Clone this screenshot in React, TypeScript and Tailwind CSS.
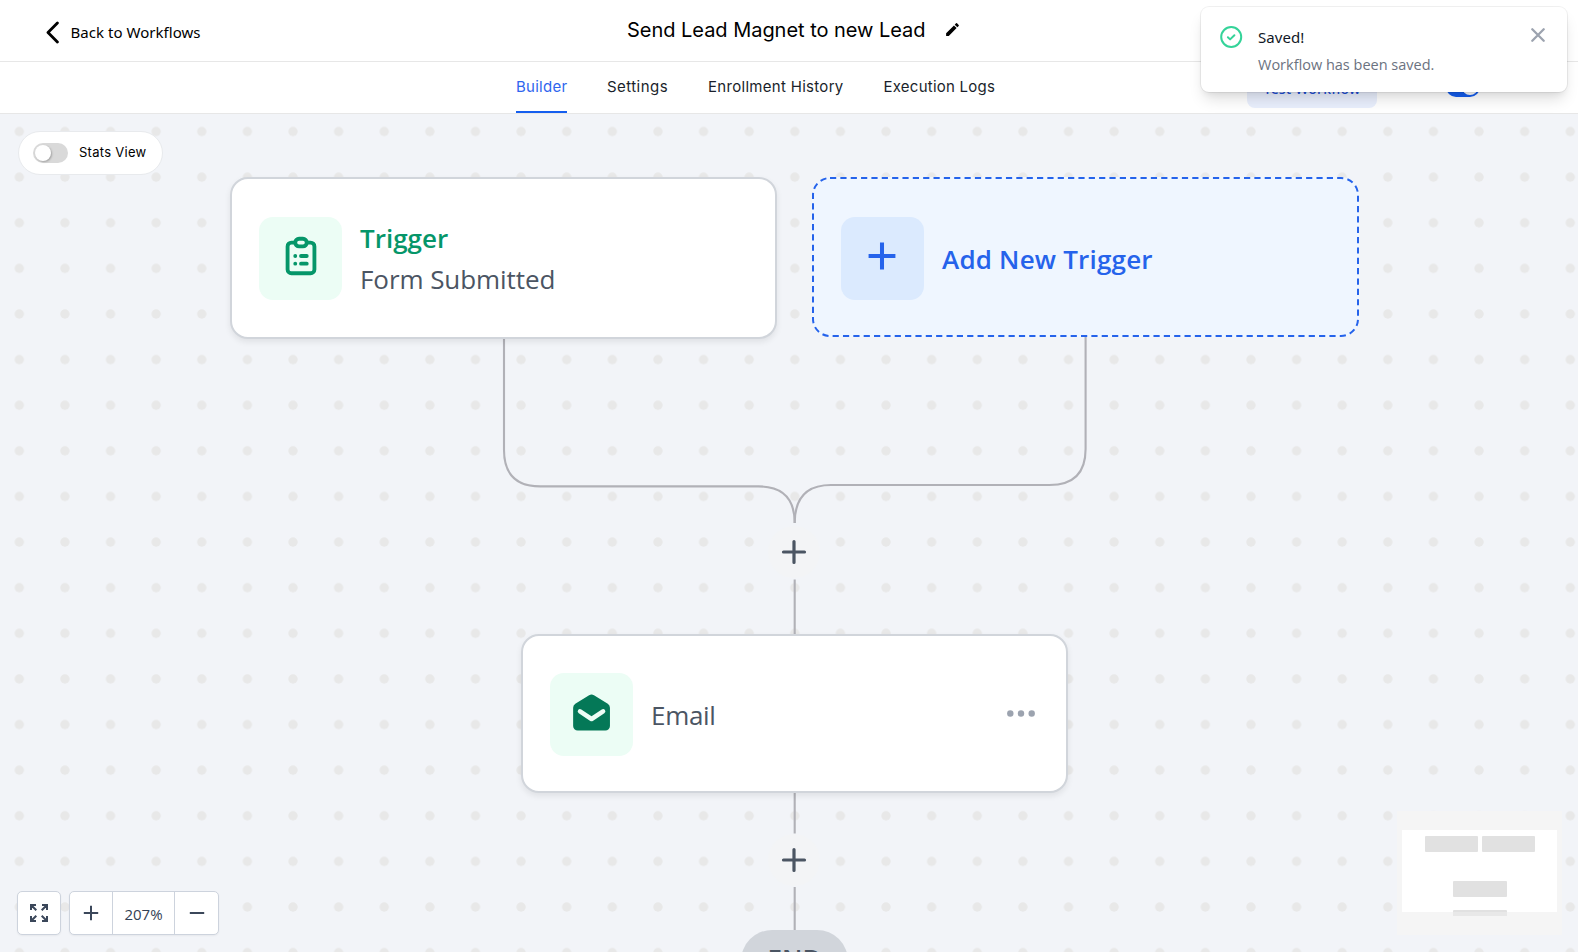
import type { ReactNode } from 'react';

const SEGOE = "font-['Open_Sans','Noto_Sans',sans-serif]";
const NOTO = "font-['Noto_Sans','Open_Sans',sans-serif]";

const tabs = [
  { label: 'Builder', size: 'w-[51px] tracking-[0.25px]', active: true },
  { label: 'Settings', size: 'w-[61px] tracking-[0.45px]', active: false },
  { label: 'Enrollment History', size: 'w-[135.5px] tracking-[0.3px]', active: false },
  { label: 'Execution Logs', size: 'w-[112px] tracking-[0.24px]', active: false },
];

function Header() {
  return (
    <header className="flex h-[62px] shrink-0 items-center border-b border-[#e7e7e7] bg-white pl-[46px]">
      <button className="flex w-[581px] items-center gap-[11.5px] pt-[3px] text-black">
        <svg className="h-[23px] w-[13px]" viewBox="0 0 13 23" fill="none" stroke="currentColor" strokeWidth="2.8">
          <path d="M11.4 1.9 2 11.5l9.4 9.6" strokeLinecap="round" strokeLinejoin="round" />
        </svg>
        <span className={`${NOTO} text-[15px] leading-5 tracking-[0.04px]`}>Back to Workflows</span>
      </button>
      <div className="flex items-center gap-[16.5px] pb-0.5">
        <h1 className="w-[300px] whitespace-nowrap text-xl leading-7 tracking-[-0.03px] text-black">Send Lead Magnet to new Lead</h1>
        <svg className="size-[17px]" viewBox="0 0 24 24" fill="black">
          <path d="M3 17.25V21h3.75L17.81 9.94l-3.75-3.75L3 17.25zM20.71 7.04a1 1 0 0 0 0-1.41l-2.34-2.34a1 1 0 0 0-1.41 0l-1.83 1.83 3.75 3.75 1.83-1.83z" />
        </svg>
      </div>
    </header>
  );
}

function TabBar() {
  return (
    <nav className="flex h-[52px] shrink-0 border-b border-[#e7e7e7] bg-white pl-[516px]">
      <div className="flex gap-10">
        {tabs.map((t) => (
          <button
            key={t.label}
            className={`${t.size} flex h-[51px] whitespace-nowrap pt-[15px] text-[15px] leading-5 ${
              t.active ? 'border-b-2 border-[#155eef] text-[#2f66ee]' : 'text-[#1a1f2b]'
            }`}
          >
            {t.label}
          </button>
        ))}
      </div>
      <div className="ml-[251.5px] flex items-start gap-[68.5px] pt-[9px]">
        <button className={`${NOTO} h-[36.5px] w-[130px] rounded-lg bg-[#e9effd] pb-px text-sm font-medium tracking-[0.2px] text-[#1d4fd8]`}>
          Test Workflow
        </button>
        <span className="mt-1.5 flex h-5 w-[34px] justify-end rounded-full bg-[#155eef] p-0.5">
          <span className="size-4 rounded-full bg-white" />
        </span>
      </div>
    </nav>
  );
}

function Toast() {
  return (
    <div className="absolute left-[1201px] top-[7px] z-20 flex h-[85px] w-[366px] rounded-lg bg-white pl-[18px] pt-[18px] shadow-[0_0_0_1px_rgba(0,0,0,0.06),0_10px_15px_-3px_rgba(0,0,0,0.13),0_4px_6px_-2px_rgba(0,0,0,0.06)]">
      <svg className="size-6" viewBox="0 0 24 24" fill="none" stroke="#34d399" strokeWidth="2">
        <circle cx="12.2" cy="12" r="10" />
        <path d="m8.9 12.3 2.2 2.1 4.3-4.2" strokeLinecap="round" strokeLinejoin="round" />
      </svg>
      <div className={`${NOTO} ml-[15px] flex w-[273px] flex-col gap-2 pt-0.5`}>
        <p className="text-[15px] leading-5 tracking-[0.05px] text-[#111827]">Saved!</p>
        <p className={`${SEGOE} text-[14.5px] leading-5 text-[#6b7280]`}>Workflow has been saved.</p>
      </div>
      <svg className="mt-[3px] size-[14px]" viewBox="0 0 14 14" fill="none" stroke="#9ca3af" strokeWidth="2.3" strokeLinecap="round">
        <path d="m1.3 1.3 11.4 11.4m0-11.4L1.3 12.7" />
      </svg>
    </div>
  );
}

function NodeCard({ place, tone, icon, children }: { place: string; tone: string; icon: ReactNode; children: ReactNode }) {
  return (
    <div className={`absolute ${place} flex w-[547px] items-center gap-[18px] rounded-[18px] ${SEGOE} text-[26px] leading-[40.5px]`}>
      <div className={`flex size-[83px] shrink-0 items-center justify-center rounded-[14px] pb-1 ${tone}`}>{icon}</div>
      {children}
    </div>
  );
}

function AddStep({ place }: { place: string }) {
  return (
    <div className={`absolute ${place} flex size-[52px] items-center justify-center rounded-full bg-[#f3f4f6]`}>
      <svg className="size-[26px]" viewBox="0 0 26 26" stroke="#4b5563" strokeWidth="3.2" strokeLinecap="round">
        <path d="M13 2.5v21M2.5 13h21" />
      </svg>
    </div>
  );
}

function Edges() {
  return (
    <svg className="absolute inset-0 h-[838px] w-[1578px]" viewBox="0 114 1578 838" fill="none" stroke="#b1b1b7" strokeWidth="2.1">
      <path d="M504 338V450Q504 486.4 540.5 486.4H758.5Q794.7 486.4 794.7 523" />
      <path d="M1085.6 336V449Q1085.6 485 1049.5 485H831Q794.7 485 794.7 523" />
      <path d="M794.7 579.5V635M794.7 792V833.5M794.7 887V931" />
    </svg>
  );
}

function DotGrid() {
  return (
    <svg className="absolute inset-0 h-[838px] w-[1578px]">
      <defs>
        <pattern id="dots" x="-3.5" y="-5.3" width="45.617" height="45.617" patternUnits="userSpaceOnUse">
          <circle cx="22.8" cy="22.8" r="4.7" fill="#e8e8e8" />
        </pattern>
      </defs>
      <rect width="1578" height="838" fill="url(#dots)" />
    </svg>
  );
}

function MiniMap() {
  return (
    <svg className="absolute left-[1397px] top-[697px] h-[124px] w-[165px]" viewBox="0 0 165 124">
      <rect width="165" height="124" fill="#f5f5f5" />
      <rect x="5" y="19" width="155" height="82" fill="white" />
      <g fill="#e1e1e1">
        <rect x="28" y="25" width="53" height="16" rx="1" />
        <rect x="85" y="25" width="53" height="16" rx="1" />
        <rect x="56" y="70" width="54" height="16" rx="1" />
        <rect x="56" y="99" width="54" height="3" rx="1" />
      </g>
      <rect x="56" y="101" width="54" height="4" fill="#e8e8e8" />
    </svg>
  );
}

function ZoomControls() {
  return (
    <div className="absolute left-[17px] top-[777px] flex h-11 gap-2 text-[#3b475a]">
      <button className="flex w-11 items-center justify-center rounded-[5px] border border-[#cdd3dd] bg-white shadow-xs">
        <svg className="size-[18px]" viewBox="0 0 18 18" fill="none" stroke="currentColor" strokeWidth="2">
          <path d="M1 6V1h5M1.3 1.3l5 5M12 1h5v5M16.7 1.3l-5 5M1 12v5h5M1.3 16.7l5-5M12 17h5v-5M16.7 16.7l-5-5" />
        </svg>
      </button>
      <div className="flex w-[150px] divide-x divide-[#cdd3dd] rounded-[5px] border border-[#cdd3dd] bg-white shadow-xs">
        <button className="flex w-[43px] items-center justify-center">
          <svg className="size-4" viewBox="0 0 16 16" stroke="currentColor" strokeWidth="2">
            <path d="M.8 8h14.4" />
            <path d="M8 .8v14.4" />
          </svg>
        </button>
        <span className={`${SEGOE} flex w-[62px] items-center justify-center pt-px text-[15px] leading-5 text-[#334155]`}>207%</span>
        <button className="flex w-[43px] items-center justify-center">
          <svg className="size-4" viewBox="0 0 16 16" stroke="currentColor" strokeWidth="2">
            <path d="M.8 8h14.4" />
          </svg>
        </button>
      </div>
    </div>
  );
}

function Canvas() {
  return (
    <main className="relative min-h-0 flex-1 overflow-hidden bg-[#f2f4f8]">
      <DotGrid />
      <Edges />

      <NodeCard
        place="left-[230px] top-[63px] h-[162px] border-2 border-[#d1d5db] bg-white pl-[27px] shadow-[0_3px_6px_rgba(0,0,0,0.08)]"
        tone="bg-[#ecfdf5]"
        icon={
          <svg className="size-[46px]" viewBox="0 0 24 24" fill="none" stroke="#059669" strokeWidth="2" strokeLinecap="round" strokeLinejoin="round">
            <path d="M9 5H7a2 2 0 0 0-2 2v12a2 2 0 0 0 2 2h10a2 2 0 0 0 2-2V7a2 2 0 0 0-2-2h-2M9 5a2 2 0 0 0 2 2h2a2 2 0 0 0 2-2M9 5a2 2 0 0 1 2-2h2a2 2 0 0 1 2 2m-3 7h3m-3 4h3m-6-4h.01M9 16h.01" />
          </svg>
        }
      >
        <div className="pt-px">
          <p className="font-semibold text-[#059669]">Trigger</p>
          <p className="tracking-[-0.07px] text-[#4b5563]">Form Submitted</p>
        </div>
      </NodeCard>

      <NodeCard
        place="left-[812px] top-[63px] h-[160px] bg-[#eff6ff] pl-[29px] pt-0.5"
        tone="bg-[#dbeafe]"
        icon={
          <svg className="mr-px size-[46px]" viewBox="0 0 24 24" stroke="#2563eb" strokeWidth="2.1">
            <path d="M12 5v14M5 12h14" />
          </svg>
        }
      >
        <svg className="absolute inset-0 h-[160px] w-[547px]" fill="none">
          <rect x="1" y="1" width="545" height="158" rx="17" stroke="#2563eb" strokeWidth="2" strokeDasharray="6.2 4.15" />
        </svg>
        <p className="pt-0.5 font-semibold tracking-[0.2px] text-[#2563eb]">Add New Trigger</p>
      </NodeCard>

      <AddStep place="left-[768px] top-[412px]" />

      <NodeCard
        place="left-[521px] top-[520px] h-[159px] border-2 border-[#d1d5db] bg-white pl-[27px] pt-0.5 shadow-[0_3px_6px_rgba(0,0,0,0.08)]"
        tone="bg-[#ecfdf5]"
        icon={
          <svg className="size-[46px]" viewBox="0.2 0.4 20 20" fill="#047857">
            <path
              fillRule="evenodd"
              d="M2.94 6.412A2 2 0 0 0 2 8.108V16a2 2 0 0 0 2 2h12a2 2 0 0 0 2-2V8.108a2 2 0 0 0-.94-1.696l-6-3.75a2 2 0 0 0-2.12 0l-6 3.75zm2.615 2.423a1 1 0 1 0-1.11 1.664l5 3.333a1 1 0 0 0 1.11 0l5-3.333a1 1 0 0 0-1.11-1.664L10 11.798 5.555 8.835z"
            />
          </svg>
        }
      >
        <p className="flex-1 pt-0.5 tracking-[-0.3px] text-[#4b5563]">Email</p>
        <svg className="mb-0.5 mr-[31.5px] h-[7px] w-7" viewBox="0 0 28 7" fill="#9ca3af">
          <circle cx="3.3" cy="3.5" r="3.2" />
          <circle cx="14" cy="3.5" r="3.2" />
          <circle cx="24.7" cy="3.5" r="3.2" />
        </svg>
      </NodeCard>

      <AddStep place="left-[768px] top-[720px]" />

      <div className={`absolute left-[741px] top-[816px] flex h-[62px] w-[107px] justify-center rounded-full bg-[#d1d5db] pt-2 ${SEGOE} text-[26px] font-semibold leading-10 text-[#4b5563]`}>
        END
      </div>

      <div className="absolute left-[17.5px] top-[17px] flex h-[43.5px] w-[145px] items-center gap-[11.5px] rounded-full border border-[#e8eaed] bg-white pl-3.5">
        <span className="flex h-5 w-[35px] rounded-full bg-[#d9d9d9] p-0.5">
          <span className="size-4 rounded-full bg-white shadow-[1px_1px_2px_rgba(0,0,0,0.25)]" />
        </span>
        <span className="pb-px text-[13px] leading-5 tracking-[0.28px] text-black">Stats View</span>
      </div>

      <ZoomControls />
      <MiniMap />
    </main>
  );
}

export default function App() {
  return (
    <div className="relative flex h-[952px] w-[1578px] flex-col overflow-hidden bg-white font-['Inter',sans-serif]">
      <Header />
      <TabBar />
      <Toast />
      <Canvas />
    </div>
  );
}
